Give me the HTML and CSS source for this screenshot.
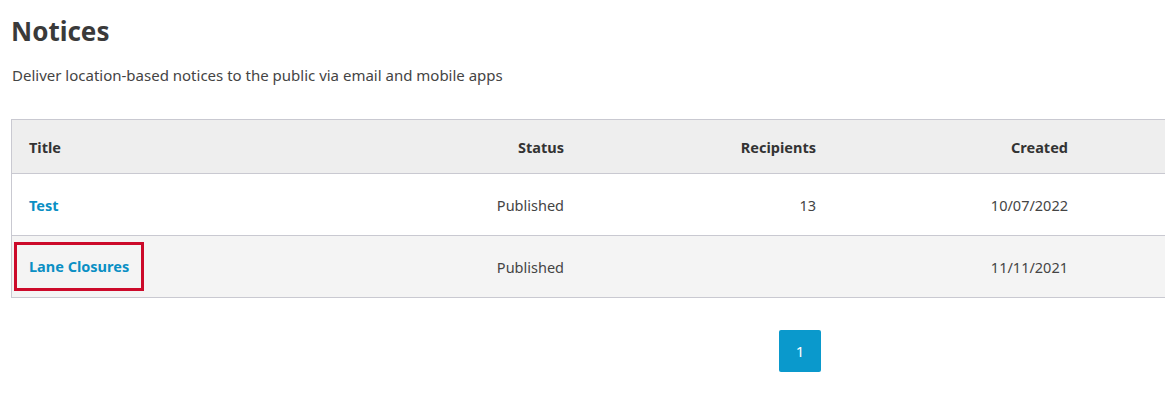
FILE: index.html
```html
<!DOCTYPE html>
<html lang="en">
<head>
    <meta charset="UTF-8">
    <meta name="viewport" content="width=device-width, initial-scale=1.0">
    <title>Notices</title>
    <link rel="stylesheet" href="styles.css">
</head>
<body>
    <div class="page">
        <h1>Notices</h1>
        <p class="lead">Deliver location-based notices to the public via email and mobile apps</p>
        <table class="notices">
            <thead>
                <tr>
                    <th class="col-title">Title</th>
                    <th class="num">Status</th>
                    <th class="num">Recipients</th>
                    <th class="num">Created</th>
                    <th></th>
                </tr>
            </thead>
            <tbody>
                <tr>
                    <td><a href="#">Test</a></td>
                    <td class="num">Published</td>
                    <td class="num">13</td>
                    <td class="num">10/07/2022</td>
                    <td></td>
                </tr>
                <tr class="alt">
                    <td><a href="#" class="highlight">Lane Closures</a></td>
                    <td class="num">Published</td>
                    <td class="num"></td>
                    <td class="num">11/11/2021</td>
                    <td></td>
                </tr>
            </tbody>
        </table>
        <div class="pager">
            <a href="#" class="page-btn">1</a>
        </div>
    </div>
</body>
</html>
```
FILE: styles.css
```css
body {
    margin: 0;
    font-family: "Noto Sans", "Open Sans", sans-serif;
    color: #444;
    background-color: #fff;
}
.page {
    padding: 0 0 0 11px;
}
h1 {
    margin: 0;
    padding-top: 14px;
    font-size: 26px;
    line-height: 34px;
    font-weight: bold;
    color: #3a3a3a;
}
.lead {
    margin: 17px 0 0 1px;
    font-size: 15px;
    line-height: 20px;
    color: #444;
}
/* the table runs on past the right edge, so no right border */
.notices {
    width: 100%;
    margin-top: 34px;
    border-collapse: collapse;
    border: 1px solid #c9c9d1;
    border-right: none;
    font-size: 14.5px;
}
.notices th,
.notices td {
    padding: 0 17px;
    text-align: left;
}
.notices th {
    height: 53px;
    background-color: #eeeeee;
    color: #333;
    font-weight: bold;
    border-bottom: 1px solid #c9c9d1;
}
.notices td {
    height: 61px;
    border-bottom: 1px solid #c9c9d1;
    color: #444;
}
.notices .col-title {
    width: 283px;
}
.notices th.num {
    width: 218px;
}
.notices .num {
    text-align: right;
}
.notices tr.alt td {
    background-color: #f4f4f4;
}
.notices a {
    color: #0a8fc4;
    font-weight: bold;
    text-decoration: none;
}
.notices a.highlight {
    display: inline-block;
    margin-left: -15px;
    padding: 11px 12px 12px 12px;
    border: 3px solid #cc0a2a;
}
.pager {
    display: flex;
    margin-top: 32px;
    padding-left: 768px;
}
.page-btn {
    display: flex;
    align-items: center;
    justify-content: center;
    width: 42px;
    height: 42px;
    border-radius: 2px;
    background-color: #0a99cc;
    color: #fff;
    font-size: 15px;
    text-decoration: none;
}
```
